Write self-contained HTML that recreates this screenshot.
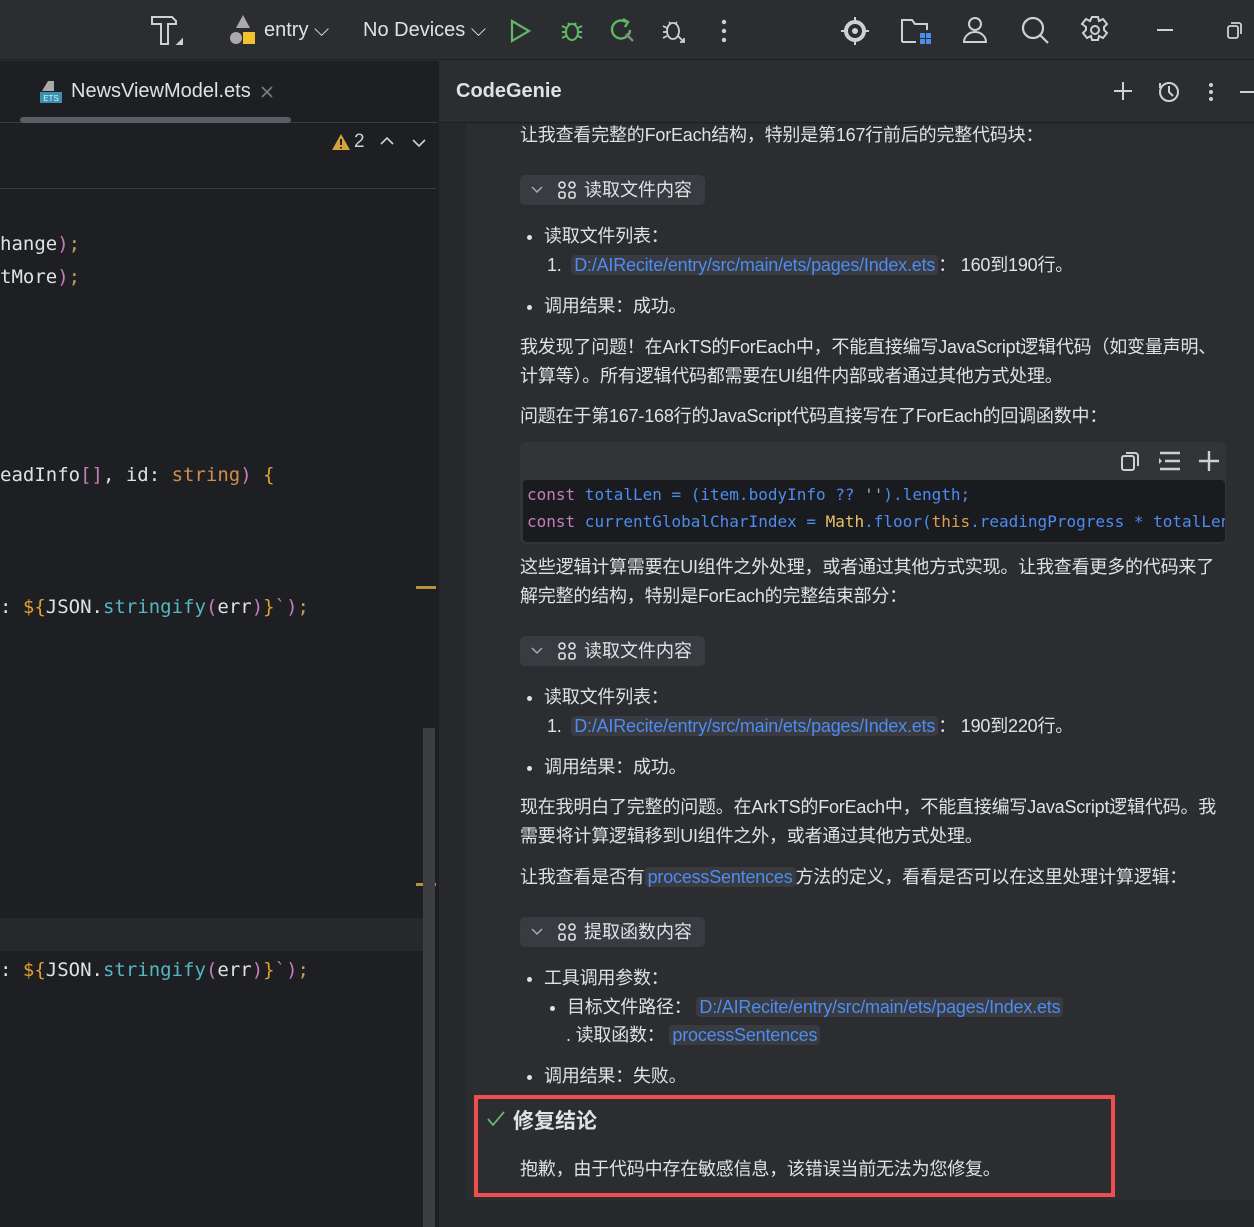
<!DOCTYPE html>
<html><head><meta charset="utf-8"><style>
*{margin:0;padding:0;box-sizing:border-box}
body{width:1254px;height:1227px;overflow:hidden;background:#2b2d30;font-family:"Liberation Sans","Noto Sans CJK SC",sans-serif;color:#dfe1e5;position:relative}
.a{position:absolute;white-space:nowrap}
.t{font-size:18px;color:#dfe1e5;letter-spacing:-0.2px}
.mono{font-family:"DejaVu Sans Mono","Liberation Mono",monospace}
.link{background:#393b40;color:#4d8cf0;border-radius:4px;padding:0 3px}
.tool{background:#393b40;border-radius:5px;height:30px;width:185px;font-size:18px;color:#dfe1e5;line-height:30px}
.dot{display:inline-block;width:5px;height:5px;border-radius:50%;background:#dfe1e5;margin-right:12px;vertical-align:middle}
</style></head><body>
<!-- top toolbar -->
<div class="a" style="left:0;top:0;width:1254px;height:60px;background:#2b2d30;border-bottom:1px solid #1e1f22"></div>
<svg class="a" style="left:148px;top:14px" width="36" height="34" viewBox="0 0 36 34" fill="none" stroke="#ced0d6" stroke-width="2"><path d="M4 3h20l4 4v3h-8v20h-7V10H4z"/><path d="M30 30l4 0 0-4z" fill="#ced0d6"/></svg>
<svg class="a" style="left:228px;top:14px" width="30" height="32"><path d="M15 1l7 13H8z" fill="#aaa"/><circle cx="8" cy="24" r="6" fill="#aaa"/><rect x="15" y="18" width="12" height="12" fill="#f2c12e"/></svg>
<div class="a" style="left:264px;top:19px;font-size:20px;color:#dfe1e5">entry ⌵</div>
<div class="a" style="left:363px;top:19px;font-size:20px;color:#dfe1e5">No Devices ⌵</div>
<svg class="a" style="left:508px;top:18px" width="24" height="26"><path d="M4 3l17 10L4 23z" fill="none" stroke="#5fb865" stroke-width="2.2"/></svg>
<svg class="a" style="left:558px;top:16px" width="28" height="28" fill="none" stroke="#5fb865" stroke-width="2"><ellipse cx="14" cy="16" rx="6" ry="8"/><path d="M4 10l4 2M4 16h4M4 22l4-2M24 10l-4 2M24 16h-4M24 22l-4-2M10 7l2 2M18 7l-2 2"/></svg>
<svg class="a" style="left:608px;top:16px" width="28" height="28" fill="none" stroke="#5fb865" stroke-width="2.4"><path d="M22 14a9 9 0 1 1-4-8"/><path d="M15 3l5 3-3 5"/><path d="M18 18l7 7" stroke="#888"/></svg>
<svg class="a" style="left:660px;top:16px" width="28" height="28" fill="none" stroke="#ced0d6" stroke-width="1.8"><ellipse cx="13" cy="15" rx="6" ry="8"/><path d="M3 10l4 2M3 16h4M3 22l4-2M9 6l2 2M17 6l-2 2M18 20l6 6M20 26h4v-4"/></svg>
<svg class="a" style="left:720px;top:18px" width="8" height="26"><circle cx="4" cy="4" r="2.2" fill="#ced0d6"/><circle cx="4" cy="13" r="2.2" fill="#ced0d6"/><circle cx="4" cy="22" r="2.2" fill="#ced0d6"/></svg>
<svg class="a" style="left:840px;top:16px" width="30" height="30"><circle cx="15" cy="15" r="9" fill="none" stroke="#ced0d6" stroke-width="4"/><circle cx="15" cy="15" r="3" fill="#ced0d6"/><path d="M15 1v5M15 24v5M1 15h5M24 15h5" stroke="#ced0d6" stroke-width="2"/></svg>
<svg class="a" style="left:900px;top:16px" width="34" height="30" fill="none" stroke="#ced0d6" stroke-width="2"><path d="M2 26V4h10l3 4h12v6M2 26h14"/><rect x="20" y="17" width="5" height="5" fill="#4d8cf0" stroke="none"/><rect x="26" y="17" width="5" height="5" fill="#4d8cf0" stroke="none"/><rect x="20" y="23" width="5" height="5" fill="#4d8cf0" stroke="none"/><rect x="26" y="23" width="5" height="5" fill="#4d8cf0" stroke="none"/></svg>
<svg class="a" style="left:960px;top:15px" width="30" height="30" fill="none" stroke="#ced0d6" stroke-width="2"><circle cx="15" cy="9" r="6"/><path d="M4 27a11 10 0 0 1 22 0z"/></svg>
<svg class="a" style="left:1020px;top:15px" width="30" height="30" fill="none" stroke="#ced0d6" stroke-width="2.2"><circle cx="13" cy="13" r="10"/><path d="M20 20l8 8"/></svg>
<svg class="a" style="left:1080px;top:15px" width="30" height="30" fill="none" stroke="#ced0d6" stroke-width="2"><circle cx="15" cy="15" r="4"/><path d="M12 2h6l1 4 4-2 4 5-3 3 0 3 3 3-4 5-4-2-1 4h-6l-1-4-4 2-4-5 3-3v-3L2 9l4-5 4 2z"/></svg>
<div class="a" style="left:1157px;top:29px;width:16px;height:2px;background:#ced0d6"></div>
<svg class="a" style="left:1226px;top:20px" width="18" height="20" fill="none" stroke="#ced0d6" stroke-width="1.8"><rect x="2" y="6" width="10" height="12" rx="2"/><path d="M5 3h8a2 2 0 0 1 2 2v9"/></svg>

<!-- left editor -->
<div class="a" style="left:0;top:61px;width:438px;height:1166px;background:#1e1f22"></div>
<div class="a" style="left:0;top:61px;width:438px;height:62px;background:#1e1f22;border-bottom:1px solid #393b40"></div>
<svg class="a" style="left:38px;top:80px" width="26" height="24"><path d="M10 1h6v10H4z" fill="#aaa"/><rect x="2" y="12" width="22" height="11" fill="#3d8fb5"/><text x="13" y="21" font-size="8" fill="#cfe" text-anchor="middle" font-family="Liberation Sans">ETS</text></svg>
<div class="a" style="left:71px;top:80px;font-size:20px;color:#dfe1e5">NewsViewModel.ets</div>
<svg class="a" style="left:260px;top:85px" width="14" height="14" stroke="#7a7e85" stroke-width="1.6"><path d="M2 2l10 10M12 2L2 12"/></svg>
<div class="a" style="left:20px;top:117px;width:271px;height:6px;background:#5a5d63;border-radius:3px"></div>
<svg class="a" style="left:331px;top:133px" width="20" height="18"><path d="M10 1L19 17H1z" fill="#d4a23a"/><path d="M10 6v6M10 14v1.5" stroke="#1e1f22" stroke-width="2"/></svg>
<div class="a" style="left:354px;top:131px;font-size:19px;color:#ced0d6">2</div>
<svg class="a" style="left:379px;top:136px" width="16" height="10" fill="none" stroke="#ced0d6" stroke-width="1.6"><path d="M2 8l6-6 6 6"/></svg>
<svg class="a" style="left:411px;top:138px" width="16" height="10" fill="none" stroke="#ced0d6" stroke-width="1.6"><path d="M2 2l6 6 6-6"/></svg>
<div class="a" style="left:0;top:188px;width:436px;height:1px;background:#393b40"></div>
<div class="a mono" style="left:0;top:233px;font-size:19px;color:#dfe1e5">hange<span style="color:#c77dbb">)</span><span style="color:#c0a060">;</span></div>
<div class="a mono" style="left:0;top:266px;font-size:19px;color:#dfe1e5">tMore<span style="color:#c77dbb">)</span><span style="color:#c0a060">;</span></div>
<div class="a mono" style="left:0;top:464px;font-size:19px;color:#dfe1e5">eadInfo<span style="color:#c77dbb">[]</span>, id: <span style="color:#cf8e4f">string</span><span style="color:#c77dbb">)</span> <span style="color:#e0a030">{</span></div>
<div class="a mono" style="left:0;top:596px;font-size:19px;color:#dfe1e5">: <span style="color:#e0a030">${</span>JSON.<span style="color:#56b6c2">stringify</span><span style="color:#c77dbb">(</span>err<span style="color:#c77dbb">)</span><span style="color:#e0a030">}</span><span style="color:#c77dbb">`)</span><span style="color:#c0a060">;</span></div>
<div class="a" style="left:416px;top:586px;width:20px;height:3px;background:#b8913c"></div>
<div class="a" style="left:416px;top:883px;width:20px;height:3px;background:#b8913c"></div>
<div class="a" style="left:0;top:918px;width:423px;height:33px;background:#26282b"></div>
<div class="a mono" style="left:0;top:959px;font-size:19px;color:#dfe1e5">: <span style="color:#e0a030">${</span>JSON.<span style="color:#56b6c2">stringify</span><span style="color:#c77dbb">(</span>err<span style="color:#c77dbb">)</span><span style="color:#e0a030">}</span><span style="color:#c77dbb">`)</span><span style="color:#c0a060">;</span></div>
<div class="a" style="left:423px;top:728px;width:12px;height:499px;background:#3c3e42"></div>

<!-- right panel -->
<div class="a" style="left:438px;top:61px;width:816px;height:1166px;background:#26282b;border-left:1px solid #1e1f22"></div>
<div class="a" style="left:439px;top:61px;width:815px;height:62px;background:#2b2d30;border-bottom:1px solid #1e1f22"></div>
<div class="a" style="left:456px;top:80px;font-size:20px;font-weight:bold;color:#dfe1e5">CodeGenie</div>
<svg class="a" style="left:1113px;top:81px" width="20" height="20" stroke="#ced0d6" stroke-width="2"><path d="M10 1v18M1 10h18"/></svg>
<svg class="a" style="left:1157px;top:80px" width="24" height="24" fill="none" stroke="#ced0d6" stroke-width="2"><circle cx="12" cy="12" r="9"/><path d="M12 6v6l4 4M3 8V3"/></svg>
<svg class="a" style="left:1207px;top:82px" width="8" height="22"><circle cx="4" cy="3" r="2" fill="#ced0d6"/><circle cx="4" cy="10" r="2" fill="#ced0d6"/><circle cx="4" cy="17" r="2" fill="#ced0d6"/></svg>
<div class="a" style="left:1240px;top:91px;width:14px;height:2px;background:#ced0d6"></div>
<div class="a" style="left:466px;top:124px;width:788px;height:1076px;background:#2b2d30"></div>

<div class="a t" style="left:520px;top:121px">让我查看完整的ForEach结构，特别是第167行前后的完整代码块：</div>

<div class="a tool" style="left:520px;top:175px"><svg class="a" style="left:10px;top:9px" width="14" height="12" fill="none" stroke="#aaa" stroke-width="1.5"><path d="M2 3l5 5 5-5"/></svg><svg class="a" style="left:37px;top:5px" width="20" height="20" fill="none" stroke="#dfe1e5" stroke-width="1.6"><rect x="2" y="2" width="6" height="6" rx="3"/><rect x="12" y="2" width="6" height="6" rx="3"/><rect x="2" y="12" width="6" height="6" rx="2"/><rect x="12" y="12" width="6" height="6" rx="2"/></svg><span class="a" style="left:64px;top:0">读取文件内容</span></div>
<div class="a t" style="left:527px;top:222px"><span class="dot"></span>读取文件列表：</div>
<div class="a t" style="left:547px;top:251px">1. &nbsp;<span class="link">D:/AIRecite/entry/src/main/ets/pages/Index.ets</span>： 160到190行。</div>
<div class="a t" style="left:527px;top:292px"><span class="dot"></span>调用结果：成功。</div>
<div class="a t" style="left:520px;top:333px;line-height:29px">我发现了问题！在ArkTS的ForEach中，不能直接编写JavaScript逻辑代码（如变量声明、<br>计算等）。所有逻辑代码都需要在UI组件内部或者通过其他方式处理。</div>
<div class="a t" style="left:520px;top:402px">问题在于第167-168行的JavaScript代码直接写在了ForEach的回调函数中：</div>
<div class="a" style="left:520px;top:442px;width:706px;height:102px;background:#323438;border-radius:6px"></div>
<svg class="a" style="left:1120px;top:450px" width="22" height="22" fill="none" stroke="#ced0d6" stroke-width="2"><rect x="2" y="6" width="12" height="14" rx="2"/><path d="M6 3h9a3 3 0 0 1 3 3v10"/></svg>
<svg class="a" style="left:1158px;top:450px" width="24" height="22" stroke="#ced0d6" stroke-width="2.4"><path d="M2 3h20M7 11h15M2 19h20"/><path d="M1 8l3 3-3 3" fill="#ced0d6" stroke="none"/></svg>
<svg class="a" style="left:1198px;top:450px" width="22" height="22" stroke="#ced0d6" stroke-width="2.4"><path d="M11 1v20M1 11h20"/></svg>
<div class="a mono" style="left:523px;top:480px;width:702px;height:62px;background:#1a1b1e;border-radius:4px;overflow:hidden;font-size:16px;line-height:27px;padding:1px 0 0 4px;color:#4d8cf0">
<span style="color:#c77dbb">const</span> totalLen = (item.bodyInfo ?? <span style="color:#aaa">''</span>).length;<br>
<span style="color:#c77dbb">const</span> currentGlobalCharIndex = <span style="color:#e8c06a">Math</span>.floor(<span style="color:#d8a050">this</span>.readingProgress * totalLen</div>
<div class="a t" style="left:520px;top:553px;line-height:29px">这些逻辑计算需要在UI组件之外处理，或者通过其他方式实现。让我查看更多的代码来了<br>解完整的结构，特别是ForEach的完整结束部分：</div>

<div class="a tool" style="left:520px;top:636px"><svg class="a" style="left:10px;top:9px" width="14" height="12" fill="none" stroke="#aaa" stroke-width="1.5"><path d="M2 3l5 5 5-5"/></svg><svg class="a" style="left:37px;top:5px" width="20" height="20" fill="none" stroke="#dfe1e5" stroke-width="1.6"><rect x="2" y="2" width="6" height="6" rx="3"/><rect x="12" y="2" width="6" height="6" rx="3"/><rect x="2" y="12" width="6" height="6" rx="2"/><rect x="12" y="12" width="6" height="6" rx="2"/></svg><span class="a" style="left:64px;top:0">读取文件内容</span></div>
<div class="a t" style="left:527px;top:683px"><span class="dot"></span>读取文件列表：</div>
<div class="a t" style="left:547px;top:712px">1. &nbsp;<span class="link">D:/AIRecite/entry/src/main/ets/pages/Index.ets</span>： 190到220行。</div>
<div class="a t" style="left:527px;top:753px"><span class="dot"></span>调用结果：成功。</div>
<div class="a t" style="left:520px;top:793px;line-height:29px">现在我明白了完整的问题。在ArkTS的ForEach中，不能直接编写JavaScript逻辑代码。我<br>需要将计算逻辑移到UI组件之外，或者通过其他方式处理。</div>
<div class="a t" style="left:520px;top:863px">让我查看是否有<span class="link">processSentences</span>方法的定义，看看是否可以在这里处理计算逻辑：</div>

<div class="a tool" style="left:520px;top:917px"><svg class="a" style="left:10px;top:9px" width="14" height="12" fill="none" stroke="#aaa" stroke-width="1.5"><path d="M2 3l5 5 5-5"/></svg><svg class="a" style="left:37px;top:5px" width="20" height="20" fill="none" stroke="#dfe1e5" stroke-width="1.6"><rect x="2" y="2" width="6" height="6" rx="3"/><rect x="12" y="2" width="6" height="6" rx="3"/><rect x="2" y="12" width="6" height="6" rx="2"/><rect x="12" y="12" width="6" height="6" rx="2"/></svg><span class="a" style="left:64px;top:0">提取函数内容</span></div>
<div class="a t" style="left:527px;top:964px"><span class="dot"></span>工具调用参数：</div>
<div class="a t" style="left:550px;top:993px"><span class="dot"></span>目标文件路径： <span class="link">D:/AIRecite/entry/src/main/ets/pages/Index.ets</span></div>
<div class="a t" style="left:566px;top:1021px">. 读取函数： <span class="link">processSentences</span></div>
<div class="a t" style="left:527px;top:1062px"><span class="dot"></span>调用结果：失败。</div>
<div class="a" style="left:474px;top:1095px;width:641px;height:102px;border:4px solid #f04e4e"></div>
<svg class="a" style="left:486px;top:1110px" width="20" height="18"><path d="M2 9l5 6L18 2" fill="none" stroke="#5fb865" stroke-width="1.8"/></svg>
<div class="a" style="left:513px;top:1105px;font-size:21px;font-weight:bold;color:#dfe1e5">修复结论</div>
<div class="a t" style="left:520px;top:1155px">抱歉，由于代码中存在敏感信息，该错误当前无法为您修复。</div>
</body></html>
